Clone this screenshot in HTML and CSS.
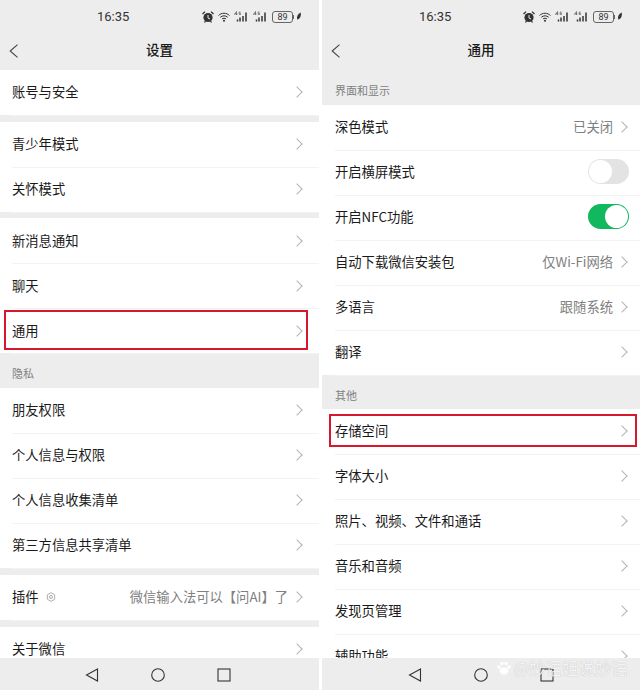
FILE: index.html
```html
<!DOCTYPE html>
<html>
<head>
<meta name="viewport" content="width=device-width, initial-scale=1">
<link rel="stylesheet" href="styles.css">
</head>
<body>

<svg class="defs" width="0" height="0">
    <symbol id="alarm" viewBox="0 0 12 12">
        <circle cx="6" cy="6.5" r="4.6" fill="#333"/>
        <path d="M6 4v3l2 1" fill="none" stroke="#eee" stroke-width="1"/>
        <path d="M0.5 3L3 0.6M11.5 3L9 0.6M2.5 11.5l1-1.5M9.500 11.500l-1-1.500" stroke="#333" stroke-width="1.300" fill="none"/>
    </symbol>
    <symbol id="wifi" viewBox="0 0 12 10">
        <path d="M0.500 3.500C3.500 0.500 8.500 0.500 11.500 3.500M2.300 5.300C4.500 3.300 7.500 3.300 9.700 5.300M4 7C5.200 6 6.800 6 8 7" fill="none" stroke="#333" stroke-width="1"/>
        <circle cx="6" cy="8.800" r="1" fill="#333"/>
    </symbol>
    <symbol id="signal" viewBox="0 0 15 11">
        <path d="M3.500 10.500v-2M6 10.500v-4M9 10.500V5M12 10.500V1.500" fill="none" stroke="#333" stroke-width="1.500"/>
        <path d="M0.500 3.500l2-3v3.500M0.500 3h3M6.500 1H5.200v2.500h1.300V2.300h-.7" fill="none" stroke="#555" stroke-width=".7"/>
    </symbol>
    <symbol id="leaf" viewBox="0 0 6 9">
        <path d="M4.800 0.500C1.500 2 0.500 4.500 1.200 7.500C4 7 5.300 4 4.800 0.500z" fill="#333"/>
    </symbol>
    <symbol id="back" viewBox="0 0 10 14">
        <path d="M8.500 0.700L1.200 7l7.300 6.300" fill="none" stroke="#444" stroke-width="1.100"/>
    </symbol>
</svg>

<div class="screens">

    <!-- settings screen -->
    <div class="phone">
        <div class="status">
            <span class="time">16:35</span>
            <div class="status-icons">
                <svg class="ic-alarm"><use href="#alarm"/></svg>
                <svg class="ic-wifi"><use href="#wifi"/></svg>
                <svg class="ic-signal"><use href="#signal"/></svg>
                <svg class="ic-signal"><use href="#signal"/></svg>
                <span class="battery">89</span>
                <span class="battery-tip"></span>
                <svg class="ic-leaf"><use href="#leaf"/></svg>
            </div>
        </div>
        <div class="header">
            <svg class="ic-back"><use href="#back"/></svg>
            <span class="title">设置</span>
        </div>
        <div class="list">
            <div class="group">
                <div class="row"><span>账号与安全</span><i class="arrow"></i></div>
            </div>
            <div class="group gap">
                <div class="row"><span>青少年模式</span><i class="arrow"></i></div>
                <div class="row"><span>关怀模式</span><i class="arrow"></i></div>
            </div>
            <div class="group gap-small low">
                <div class="row"><span>新消息通知</span><i class="arrow"></i></div>
                <div class="row"><span>聊天</span><i class="arrow"></i></div>
                <div class="row marked-left"><span>通用</span><i class="arrow"></i></div>
            </div>
            <div class="section">隐私</div>
            <div class="group">
                <div class="row"><span>朋友权限</span><i class="arrow"></i></div>
                <div class="row"><span>个人信息与权限</span><i class="arrow"></i></div>
                <div class="row"><span>个人信息收集清单</span><i class="arrow"></i></div>
                <div class="row"><span>第三方信息共享清单</span><i class="arrow"></i></div>
            </div>
            <div class="group gap">
                <div class="row">
                    <span>插件</span>
                    <svg class="ic-plugin" viewBox="0 0 10 10">
                        <path d="M5 0.700L8.700 2.800V7.200L5 9.300L1.300 7.200V2.800z" fill="none" stroke="#999" stroke-width=".8"/>
                        <circle cx="5" cy="5" r="1.500" fill="none" stroke="#999" stroke-width=".8"/>
                    </svg>
                    <span class="value">微信输入法可以【问AI】了</span><i class="arrow"></i>
                </div>
            </div>
            <div class="group gap">
                <div class="row"><span>关于微信</span><i class="arrow"></i></div>
            </div>
        </div>
        <div class="nav">
            <svg class="ic-nav" viewBox="0 0 14 14"><path d="M12.500 1L1.500 7l11 6z" fill="none" stroke="#333" stroke-width="1.100"/></svg>
            <svg class="ic-nav" viewBox="0 0 14 14"><circle cx="7" cy="7" r="6.300" fill="none" stroke="#333" stroke-width="1.100"/></svg>
            <svg class="ic-nav" viewBox="0 0 14 14"><rect x="1" y="1" width="12" height="12" fill="none" stroke="#333" stroke-width="1.100"/></svg>
        </div>
    </div>

    <!-- general screen -->
    <div class="phone general">
        <div class="status">
            <span class="time">16:35</span>
            <div class="status-icons">
                <svg class="ic-alarm"><use href="#alarm"/></svg>
                <svg class="ic-wifi"><use href="#wifi"/></svg>
                <svg class="ic-signal"><use href="#signal"/></svg>
                <svg class="ic-signal"><use href="#signal"/></svg>
                <span class="battery">89</span>
                <span class="battery-tip"></span>
                <svg class="ic-leaf"><use href="#leaf"/></svg>
            </div>
        </div>
        <div class="header">
            <svg class="ic-back"><use href="#back"/></svg>
            <span class="title">通用</span>
        </div>
        <div class="list">
            <div class="section">界面和显示</div>
            <div class="group">
                <div class="row"><span>深色模式</span><span class="value">已关闭</span><i class="arrow"></i></div>
                <div class="row"><span>开启横屏模式</span><span class="toggle"></span></div>
                <div class="row"><span>开启NFC功能</span><span class="toggle on"></span></div>
                <div class="row"><span>自动下载微信安装包</span><span class="value">仅Wi-Fi网络</span><i class="arrow"></i></div>
                <div class="row"><span>多语言</span><span class="value">跟随系统</span><i class="arrow"></i></div>
                <div class="row"><span>翻译</span><i class="arrow"></i></div>
            </div>
            <div class="section short">其他</div>
            <div class="group">
                <div class="row marked-right"><span>存储空间</span><i class="arrow"></i></div>
                <div class="row"><span>字体大小</span><i class="arrow"></i></div>
                <div class="row"><span>照片、视频、文件和通话</span><i class="arrow"></i></div>
                <div class="row"><span>音乐和音频</span><i class="arrow"></i></div>
                <div class="row"><span>发现页管理</span><i class="arrow"></i></div>
                <div class="row"><span>辅助功能</span><i class="arrow"></i></div>
            </div>
        </div>
        <div class="nav">
            <svg class="ic-nav" viewBox="0 0 14 14"><path d="M12.500 1L1.500 7l11 6z" fill="none" stroke="#333" stroke-width="1.100"/></svg>
            <svg class="ic-nav" viewBox="0 0 14 14"><circle cx="7" cy="7" r="6.300" fill="none" stroke="#333" stroke-width="1.100"/></svg>
            <svg class="ic-nav" viewBox="0 0 14 14"><rect x="1" y="1" width="12" height="12" fill="none" stroke="#333" stroke-width="1.100"/></svg>
        </div>
        <div class="watermark">
            <svg class="ic-paw" viewBox="0 0 16 16">
                <ellipse cx="8" cy="11" rx="4.500" ry="3.800"/>
                <circle cx="3" cy="7" r="1.800"/>
                <circle cx="6" cy="3.500" r="1.800"/>
                <circle cx="10" cy="3.500" r="1.800"/>
                <circle cx="13" cy="7" r="1.800"/>
            </svg>
            <span>@妙语姐说妙语</span>
        </div>
    </div>

</div>

</body>
</html>
```

FILE: styles.css
```css
body {
  margin: 0;
  background: #fff;
  font-family: "Noto Sans CJK SC", "Liberation Sans", sans-serif;
  color: #1a1a1a;
}

.defs {
  position: absolute;
}

.screens {
  display: grid;
  grid-template-columns: 319px 318px;
  column-gap: 3px;
}

/* One phone screen */
.phone {
  position: relative;
  height: 690px;
  display: flex;
  flex-direction: column;
  overflow: hidden;
  background: #ededed;
}

/* Status bar */
.status {
  height: 33px;
  display: flex;
  align-items: center;
  padding-left: 97px;
  padding-right: 17px;
}

.time {
  font-family: Roboto, sans-serif;
  font-size: 13px;
  color: #333;
}

.status-icons {
  margin-left: auto;
  display: flex;
  align-items: center;
}

.ic-alarm {
  width: 12px;
  height: 12px;
}

.ic-wifi {
  width: 12px;
  height: 10px;
  margin-left: 4px;
}

.ic-signal {
  width: 15px;
  height: 11px;
  margin-left: 4px;
}

.battery {
  width: 19px;
  height: 10px;
  margin-left: 4px;
  border: 1px solid #666;
  border-radius: 3px;
  font-family: Roboto, sans-serif;
  font-size: 9px;
  line-height: 10px;
  text-align: center;
  color: #333;
}

.battery-tip {
  width: 1px;
  height: 4px;
  background: #666;
}

.ic-leaf {
  width: 6px;
  height: 9px;
  margin-left: 2px;
}

/* Title bar */
.header {
  position: relative;
  height: 37px;
  padding-bottom: 5px;
  box-sizing: border-box;
  display: flex;
  align-items: center;
  justify-content: center;
}

.title {
  font-size: 13.500px;
  font-weight: 500;
}

.ic-back {
  position: absolute;
  left: 9px;
  top: 11px;
  width: 10px;
  height: 14px;
}

/* Settings list */
.list {
  flex: 1;
  min-height: 0;
  overflow: hidden;
}

.group {
  background: #fff;
}

.gap {
  margin-top: 7px;
}

.gap-small {
  margin-top: 6px;
}

.section {
  height: 35px;
  padding: 12px 12px 0;
  box-sizing: border-box;
  font-size: 11px;
  line-height: 16px;
  color: #808080;
}

.section.short {
  height: 34px;
}

.general .section {
  padding-left: 13px;
}

.row {
  position: relative;
  height: 45px;
  margin-left: 12px;
  padding-right: 16px;
  padding-bottom: 2px;
  display: flex;
  align-items: center;
  box-sizing: border-box;
  font-size: 13.300px;
  box-shadow: 0 1px 0 #f3f3f3;
}

.group.low .row {
  padding-bottom: 0;
}

.general .row {
  margin-left: 13px;
  padding-right: 12px;
}

.value {
  margin-left: auto;
  margin-right: 5px;
  color: #808080;
}

.arrow {
  margin-left: auto;
  margin-right: 2px;
  width: 8px;
  height: 8px;
  box-sizing: border-box;
  border-top: 1px solid #b4b4b4;
  border-right: 1px solid #b4b4b4;
  transform: rotate(45deg);
}

.value + .arrow {
  margin-left: 0;
}

.ic-plugin {
  width: 10px;
  height: 10px;
  margin-left: 7px;
}

/* Switches */
.toggle {
  position: relative;
  margin-left: auto;
  margin-right: -1px;
  width: 41px;
  height: 25px;
  border-radius: 13px;
  background: #e3e3e3;
}

.toggle:before {
  content: "";
  position: absolute;
  left: 1px;
  top: 1px;
  width: 23px;
  height: 23px;
  border-radius: 50%;
  background: #fff;
}

.toggle.on {
  background: #12b85e;
}

.toggle.on:before {
  left: 17px;
}

/* Red boxes drawn over the rows */
.marked-left:after,
.marked-right:after {
  content: "";
  position: absolute;
  box-sizing: border-box;
  border: 2px solid #d7172b;
}

.marked-left:after {
  left: -8px;
  right: 11px;
  top: 2px;
  bottom: 3px;
}

.marked-right:after {
  left: -6px;
  right: 3px;
  top: 5px;
  bottom: 7px;
}

/* Bottom navigation */
.nav {
  height: 32px;
  flex: none;
  box-sizing: border-box;
  padding-right: 3px;
  padding-top: 1px;
  display: flex;
  align-items: center;
  justify-content: center;
  gap: 52px;
}

.general .nav {
  padding-right: 0;
}

.ic-nav {
  width: 14px;
  height: 14px;
}

/* Watermark over the nav bar */
.watermark {
  position: absolute;
  right: 12px;
  bottom: 11px;
  display: flex;
  align-items: center;
  font-size: 16.500px;
  line-height: 22px;
  color: rgba(255, 255, 255, 0.85);
  text-shadow: 0 0 1px rgba(0, 0, 0, 0.25);
}

.ic-paw {
  width: 16px;
  height: 16px;
  margin-right: 1px;
  fill: rgba(255, 255, 255, 0.9);
}
```
